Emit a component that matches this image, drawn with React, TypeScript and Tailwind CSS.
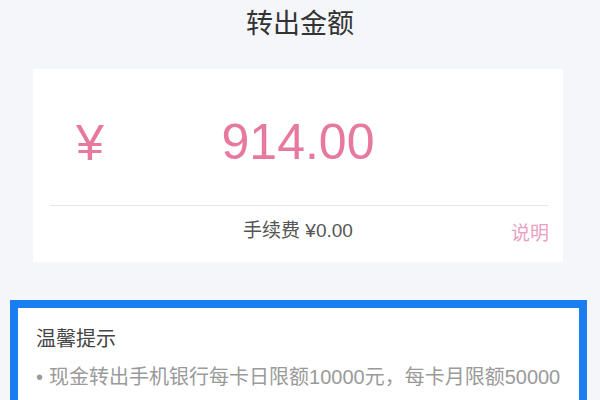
const font = {
  fontFamily: '"Liberation Sans", "Noto Sans CJK SC", sans-serif',
};

function AmountCard() {
  return (
    <div className="ml-[33px] mt-[27px] w-[530px] h-[193px] bg-white flex flex-col">
      <div className="relative h-[136px] flex items-center justify-center pt-[10px]">
        <span className="absolute left-[43px] top-[49px] text-[50px] leading-none text-[#e7799f]">
          ¥
        </span>
        <span className="text-[50px] leading-none text-[#e7799f]">914.00</span>
      </div>
      <div className="ml-[17px] mr-[15px] h-[1px] bg-[#e6e6e6]" />
      <div className="relative flex-1 flex items-center justify-center pb-[6px]">
        <span className="text-[19px] text-[#555]">手续费 ¥0.00</span>
        <span className="absolute right-[14px] top-[14px] text-[19px] text-[#eaa0c0]">
          说明
        </span>
      </div>
    </div>
  );
}

function TipsBox() {
  return (
    <div className="ml-[10px] mt-[38px] w-[577px] h-[120px] border-[8px] border-b-0 border-[#1a7ef2] bg-white pl-[18px] pt-[18px]">
      <div className="text-[20px] leading-[26px] text-[#444]">温馨提示</div>
      <div className="mt-[12px] text-[20px] leading-[26px] text-[#9a9a9a] whitespace-nowrap">
        <span className="mr-[6px]">•</span>
        现金转出手机银行每卡日限额10000元，每卡月限额50000
      </div>
    </div>
  );
}

export default function App() {
  return (
    <div
      className="w-[600px] h-[400px] overflow-hidden bg-[#f4f6f9]"
      style={font}
    >
      <div className="pt-[6px] text-center text-[27px] leading-[36px] text-[#333]">
        转出金额
      </div>
      <AmountCard />
      <TipsBox />
    </div>
  );
}
